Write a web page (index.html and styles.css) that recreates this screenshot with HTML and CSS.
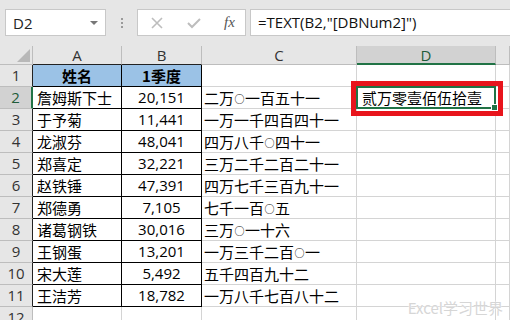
FILE: index.html
```html
<!DOCTYPE html>
<html lang="zh-CN">
<head>
    <meta charset="UTF-8">
    <title>TEXT DBNum2</title>
    <link rel="stylesheet" href="styles.css">
</head>
<body>
    <div class="topbar">
        <div class="namebox">
            <span>D2</span>
            <span class="caret"></span>
        </div>
        <div class="grip"><i></i><i></i><i></i></div>
        <div class="fbuttons">
            <svg class="ico" width="14" height="14" viewBox="0 0 14 14"><path d="M2 2 L12 12 M12 2 L2 12" stroke="#bdbdbd" stroke-width="1.6" fill="none"/></svg>
            <svg class="ico" width="16" height="14" viewBox="0 0 16 14"><path d="M2 7 L6 11 L14 3" stroke="#bdbdbd" stroke-width="2" fill="none"/></svg>
            <span class="fx">fx</span>
        </div>
        <div class="formula">=TEXT(B2,"[DBNum2]")</div>
    </div>

    <div class="sheet">
        <div class="h corner"><span class="tri"></span></div>
        <div class="h col black">A</div>
        <div class="h col black">B</div>
        <div class="h col">C</div>
        <div class="h col sel">D</div>
        <div class="h col"></div>

        <div class="h rn edge">1</div>
        <div class="c bx head">姓名</div>
        <div class="c bx head">1季度</div>
        <div class="c"></div><div class="c"></div><div class="c"></div>

        <div class="h rn rsel">2</div>
        <div class="c bx">詹姆斯下士</div>
        <div class="c bx num">20,151</div>
        <div class="c">二万<span class="zero">○</span>一百五十一</div>
        <div class="c active">贰万零壹佰伍拾壹<span class="pick"><span class="handle"></span></span><span class="mark"></span></div>
        <div class="c"></div>

        <div class="h rn edge">3</div>
        <div class="c bx">于予菊</div>
        <div class="c bx num">11,441</div>
        <div class="c">一万一千四百四十一</div>
        <div class="c"></div><div class="c"></div>

        <div class="h rn edge">4</div>
        <div class="c bx">龙淑芬</div>
        <div class="c bx num">48,041</div>
        <div class="c">四万八千<span class="zero">○</span>四十一</div>
        <div class="c"></div><div class="c"></div>

        <div class="h rn edge">5</div>
        <div class="c bx">郑喜定</div>
        <div class="c bx num">32,221</div>
        <div class="c">三万二千二百二十一</div>
        <div class="c"></div><div class="c"></div>

        <div class="h rn edge">6</div>
        <div class="c bx">赵铁锤</div>
        <div class="c bx num">47,391</div>
        <div class="c">四万七千三百九十一</div>
        <div class="c"></div><div class="c"></div>

        <div class="h rn edge">7</div>
        <div class="c bx">郑德勇</div>
        <div class="c bx num">7,105</div>
        <div class="c">七千一百<span class="zero">○</span>五</div>
        <div class="c"></div><div class="c"></div>

        <div class="h rn edge">8</div>
        <div class="c bx">诸葛钢铁</div>
        <div class="c bx num">30,016</div>
        <div class="c">三万<span class="zero">○</span>一十六</div>
        <div class="c"></div><div class="c"></div>

        <div class="h rn edge">9</div>
        <div class="c bx">王钢蛋</div>
        <div class="c bx num">13,201</div>
        <div class="c">一万三千二百<span class="zero">○</span>一</div>
        <div class="c"></div><div class="c"></div>

        <div class="h rn edge">10</div>
        <div class="c bx">宋大莲</div>
        <div class="c bx num">5,492</div>
        <div class="c">五千四百九十二</div>
        <div class="c"></div><div class="c"></div>

        <div class="h rn edge">11</div>
        <div class="c bx">王洁芳</div>
        <div class="c bx num">18,782</div>
        <div class="c">一万八千七百八十二</div>
        <div class="c"></div><div class="c"></div>

        <div class="h rn">12</div>
        <div class="c"></div><div class="c"></div><div class="c"></div><div class="c"></div><div class="c"></div>
    </div>

    <div class="watermark">Excel学习世界</div>
</body>
</html>
```

FILE: styles.css
```css
body {
    margin: 0;
    width: 510px;
    height: 320px;
    overflow: hidden;
    position: relative;
    background: #fff;
    font-family: "Noto Sans CJK SC", sans-serif;
    color: #000;
}

/* formula bar */
.topbar {
    height: 46px;
    box-sizing: border-box;
    padding-top: 9px;
    background: #e6e6e6;
    display: flex;
    align-items: flex-start;
}
.namebox {
    margin-left: 5px;
    width: 101px;
    height: 27px;
    box-sizing: border-box;
    background: #fff;
    border: 1px solid #c8c8c8;
    display: flex;
    align-items: center;
    justify-content: space-between;
    padding: 0 7px 0 7px;
    font: 15px "Open Sans", sans-serif;
    color: #222;
}
.caret {
    width: 0;
    height: 0;
    border-left: 4px solid transparent;
    border-right: 4px solid transparent;
    border-top: 4px solid #777;
}
.grip {
    width: 31px;
    height: 27px;
    display: flex;
    flex-direction: column;
    align-items: center;
    justify-content: center;
    gap: 2px;
}
.grip i {
    width: 2px;
    height: 2px;
    background: #9a9a9a;
}
.fbuttons {
    width: 109px;
    height: 27px;
    box-sizing: border-box;
    background: #fff;
    border: 1px solid #c8c8c8;
    display: flex;
    align-items: center;
    padding-left: 12px;
    gap: 22px;
}
.fx {
    font: italic 15px "Liberation Serif", serif;
    color: #555;
}
.formula {
    margin-left: 4px;
    flex: 1;
    height: 27px;
    box-sizing: border-box;
    background: #fff;
    border: 1px solid #c8c8c8;
    border-right: none;
    padding-left: 7px;
    font: 15px "Open Sans", sans-serif;
    line-height: 25px;
    color: #111;
}

/* grid */
.sheet {
    display: grid;
    grid-template-columns: 33px 89px 80px 155px 139px 14px;
    grid-template-rows: 19px;
    grid-auto-rows: 22px;
}
.h, .c {
    box-sizing: border-box;
    border-right: 1px solid #d4d4d4;
    border-bottom: 1px solid #d4d4d4;
    white-space: nowrap;
    overflow: visible;
}
.h {
    background: #e6e6e6;
    border-color: #bdbdbd;
    font: 15px "Open Sans", sans-serif;
    color: #333;
    display: flex;
    align-items: center;
    justify-content: center;
}
.corner {
    position: relative;
}
.tri {
    position: absolute;
    right: 2px;
    bottom: 2px;
    width: 0;
    height: 0;
    border-left: 13px solid transparent;
    border-bottom: 13px solid #b8b8b8;
}
.col.black {
    border-bottom-color: #222;
}
.col.sel {
    background: #d2d2d2;
    border-bottom: 2px solid #217346;
    color: #1f5c3a;
}
.rn {
    font-size: 15px;
    line-height: 1;
}
.rn.edge {
    border-right-color: #222;
}
.rn.rsel {
    background: #d2d2d2;
    border-right: 2px solid #217346;
    color: #1f5c3a;
}

.c {
    font-size: 15px;
    line-height: 21px;
    padding-left: 2px;
}
.c.bx {
    border-right-color: #000;
    border-bottom-color: #000;
    padding-left: 4px;
}
.c.head {
    background: #9bc2e6;
    font-weight: bold;
    text-align: center;
    padding-left: 0;
}
.c.num {
    text-align: center;
    padding-left: 0;
    font-family: "Open Sans", "Noto Sans CJK SC", sans-serif;
}
.zero {
    display: inline-block;
    width: 11px;
    font-size: 10px;
    line-height: 1;
    vertical-align: 1px;
    text-align: center;
}
.c.active {
    position: relative;
    padding-left: 5px;
}
.pick {
    position: absolute;
    left: -1px;
    top: -1px;
    right: -1px;
    bottom: -1px;
    border: 2px solid #217346;
}
.handle {
    position: absolute;
    right: -4px;
    bottom: -4px;
    width: 5px;
    height: 5px;
    background: #217346;
    border: 1px solid #fff;
}
.mark {
    position: absolute;
    left: -6px;
    top: -6px;
    width: 152px;
    height: 35px;
    box-sizing: border-box;
    border: 5px solid #e8141c;
}

.watermark {
    position: absolute;
    right: 7px;
    bottom: 2px;
    font: 15px "Noto Sans CJK SC", sans-serif;
    color: #d6d6d6;
    text-shadow: 0 0 1px #fff, 0 0 2px #fff;
}
```
